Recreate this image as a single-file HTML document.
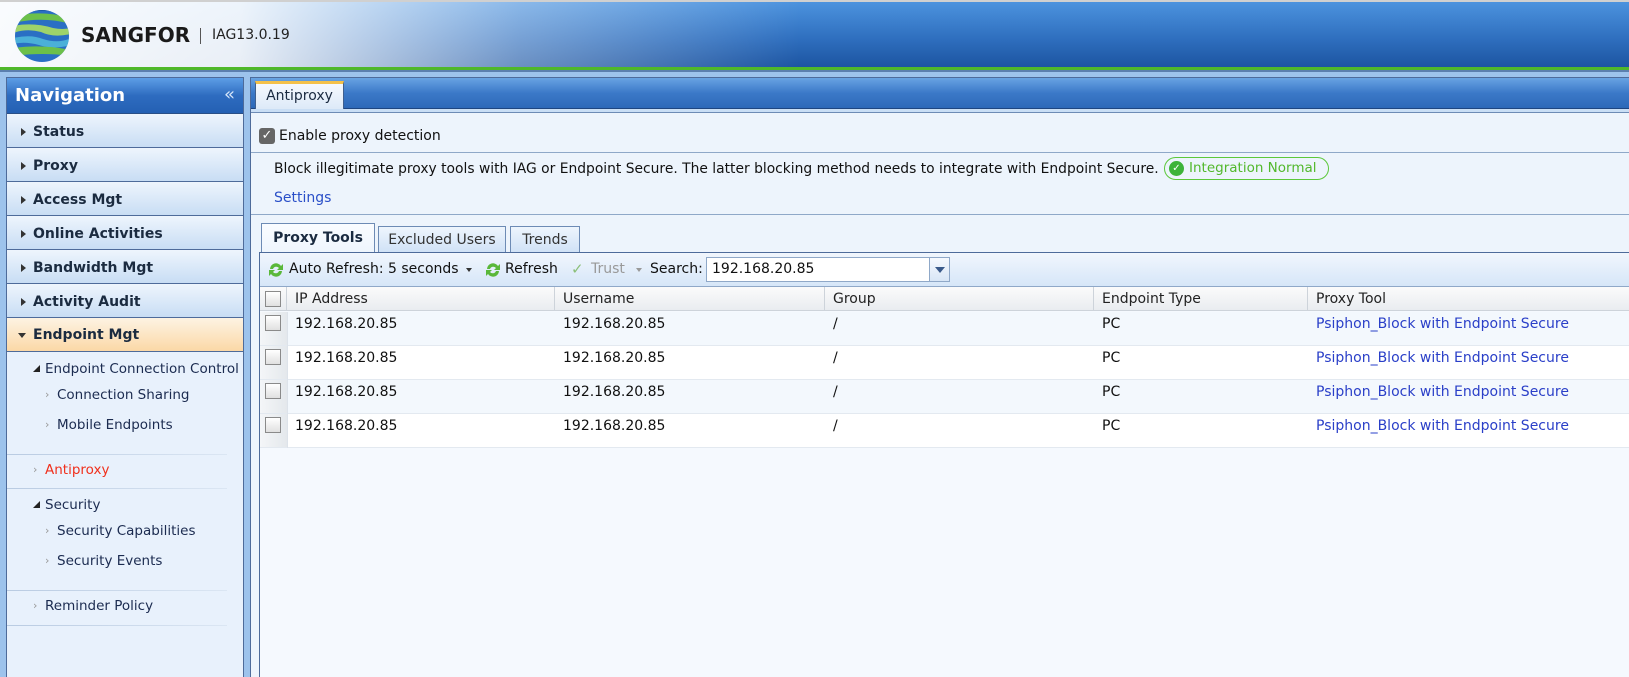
<!DOCTYPE html>
<html style="overflow:hidden;height:677px"><head><meta charset="utf-8"><style>
*{box-sizing:border-box;margin:0;padding:0}
body{width:1629px;height:677px;overflow:hidden;background:#9dc3ec;font-family:"DejaVu Sans","Liberation Sans",sans-serif;font-size:13px;color:#111;position:relative}
.abs{position:absolute}
#hdr{left:0;top:0;width:1629px;height:68px;background:linear-gradient(to right,rgba(255,255,255,.97) 0,rgba(255,255,255,.9) 240px,rgba(255,255,255,.35) 520px,rgba(255,255,255,0) 800px),linear-gradient(#4c93de,#2f6fbf 55%,#1c54a0);border-top:2px solid #d0d0d0}
#green{left:0;top:67px;width:1629px;height:3px;background:#4fb82a}
#strip{left:0;top:70px;width:1629px;height:2px;background:#5b7fae}
#nav{left:6px;top:77px;width:238px;height:600px;border:1px solid #4e6b9a;border-bottom:none;background:#e8f1fc}
#navh{left:0;top:0;width:236px;height:36px;background:linear-gradient(#5d9ee6,#2e6cc0 50%,#2460b3);color:#fff;font-weight:bold;font-size:18px;line-height:36px;padding-left:8px;border-bottom:1px solid #2a4f86}
.ni{position:absolute;left:0;width:236px;height:34px;background:linear-gradient(#eef5fd,#c8ddf4);border-bottom:1px solid #4e6b9a;font-weight:bold;font-size:14px;line-height:36px;padding-left:26px;color:#1b2b40}
.ni:before{content:"";position:absolute;left:14px;top:14px;border-left:5px solid #333;border-top:4px solid transparent;border-bottom:4px solid transparent}
.ni.open{background:linear-gradient(#fdf3e3,#fbd8a6);line-height:35px}
.ni.open:before{left:11px;top:15px;border-top:5px solid #333;border-left:4px solid transparent;border-right:4px solid transparent;border-bottom:0}
.si{position:absolute;font-size:13.5px;color:#1b2b50;white-space:nowrap}
.tri{position:absolute;width:0;height:0;border-right:7px solid #222;border-top:7px solid transparent}
.arr{position:absolute;color:#999;font-size:11px}
.sep{position:absolute;left:0;width:220px;height:1px;background:linear-gradient(to right,#b9cbe2,#dbe6f3)}
#main{left:250px;top:77px;width:1379px;height:600px;border-left:1px solid #4e6b9a;border-top:1px solid #4e6b9a;background:#edf4fc;overflow:hidden}
#tabs{left:0;top:0;width:1379px;height:31px;background:linear-gradient(#68a3e3,#3b79c8 50%,#2d68b8);border-bottom:1px solid #1e4580}
#tab1{left:4px;top:3px;width:89px;height:29px;background:linear-gradient(#f6f9fe,#dce9f8);border:1px solid #3e5f8f;border-bottom:none;border-top:3px solid #f4c14a;font-size:14px;line-height:24px;text-align:center;color:#1a2a40}
#tabline{left:0;top:31px;width:1379px;height:4px;background:#c9def5;border-bottom:1px solid #6d8bb5}
.hsep{position:absolute;left:0;width:1379px;height:1px;background:#8fa8c8}
.cb{position:absolute;width:16px;height:16px;border:1px solid #8a8a8a;background:linear-gradient(#fff,#e0e0e0)}
#stabs div{position:absolute;top:0;height:27px;border:1px solid #6d8bb5;border-bottom:none;background:linear-gradient(#eef5fd,#cfe1f6);font-size:14px;line-height:26px;text-align:center;color:#333}
#grid{left:8px;top:174px;width:1371px;height:426px;border-left:1px solid #4e6b9a;border-top:1px solid #4e6b9a;background:#f5f9fe}
#tb{left:0;top:0;width:1371px;height:34px;background:linear-gradient(#f1f6fd,#d6e6f8);border-bottom:1px solid #8fa8c8;font-size:14px}
.t{position:absolute;white-space:nowrap}
.gh{position:absolute;top:34px;height:24px;background:linear-gradient(#fbfbfb,#e9ecf0);border-right:1px solid #cdd3da;border-bottom:1px solid #cdd3da;font-size:14px;line-height:24px;padding-left:8px;color:#222}
.row{position:absolute;left:0;width:1371px;height:34px;border-bottom:1px solid #e3e9f0;font-size:14px}
.row span{position:absolute;top:4px;white-space:nowrap}
.row .cb{top:3px}
.cc{position:absolute;left:0;top:0;width:27px;height:33px;background:linear-gradient(to right,#f4f6f8,#e4e8ec)}
</style></head><body>
<div id="hdr" class="abs">
<svg class="abs" style="left:13px;top:6px" width="58" height="56" viewBox="0 0 58 56">
<defs><clipPath id="c"><ellipse cx="29" cy="28" rx="27" ry="26"/></clipPath></defs>
<g clip-path="url(#c)">
<rect width="58" height="56" fill="#2a6fc4"/>
<path d="M0 8 Q30 2 58 10 L58 16 Q30 8 0 15Z" fill="#6cc04a"/>
<path d="M0 18 Q20 14 40 20 Q50 22 58 20 L58 26 Q40 30 28 24 Q14 20 0 25Z" fill="#9ed36a"/>
<path d="M0 30 Q18 26 30 31 Q46 36 58 30 L58 37 Q40 42 26 37 Q12 33 0 36Z" fill="#4bb0d8"/>
<path d="M0 40 Q28 36 58 42 L58 48 Q30 44 0 48Z" fill="#6cc04a"/>
<path d="M0 0 L58 0 L58 6 Q30 0 0 6Z" fill="#1b5aa8"/>
</g></svg>
<div class="abs" style="left:81px;top:21px;font-family:'DejaVu Sans',sans-serif;font-weight:bold;font-size:20px;color:#1a1a1a">SANGFOR</div>
<div class="abs" style="left:200px;top:26px;width:1px;height:16px;background:#555"></div>
<div class="abs" style="left:212px;top:25px;font-size:14px;color:#222">IAG13.0.19</div>
</div>
<div id="green" class="abs"></div><div id="strip" class="abs"></div>

<div id="nav" class="abs">
<div id="navh" class="abs">Navigation<span style="position:absolute;right:8px;top:-1px;font-weight:normal;font-size:18px;color:#d6e6fa">«</span></div>
<div class="ni" style="top:36px">Status</div>
<div class="ni" style="top:70px">Proxy</div>
<div class="ni" style="top:104px">Access Mgt</div>
<div class="ni" style="top:138px">Online Activities</div>
<div class="ni" style="top:172px">Bandwidth Mgt</div>
<div class="ni" style="top:206px">Activity Audit</div>
<div class="ni open" style="top:240px">Endpoint Mgt</div>
<div class="tri" style="left:26px;top:287px"></div><div class="si" style="left:38px;top:283px">Endpoint Connection Control</div>
<div class="arr" style="left:38px;top:310px">›</div><div class="si" style="left:50px;top:309px">Connection Sharing</div>
<div class="arr" style="left:38px;top:340px">›</div><div class="si" style="left:50px;top:339px">Mobile Endpoints</div>
<div class="sep" style="top:376px"></div>
<div class="arr" style="left:26px;top:385px">›</div><div class="si" style="left:38px;top:384px;color:#f0301c">Antiproxy</div>
<div class="sep" style="top:410px"></div>
<div class="tri" style="left:26px;top:423px"></div><div class="si" style="left:38px;top:419px">Security</div>
<div class="arr" style="left:38px;top:446px">›</div><div class="si" style="left:50px;top:445px">Security Capabilities</div>
<div class="arr" style="left:38px;top:476px">›</div><div class="si" style="left:50px;top:475px">Security Events</div>
<div class="sep" style="top:512px"></div>
<div class="arr" style="left:26px;top:521px">›</div><div class="si" style="left:38px;top:520px">Reminder Policy</div>
<div class="sep" style="top:547px"></div>
</div>

<div id="main" class="abs">
<div id="tabs" class="abs"><div id="tab1" class="abs">Antiproxy</div></div>
<div id="tabline" class="abs"></div>
<div class="abs" style="left:8px;top:50px;width:16px;height:16px;border-radius:3px;background:#666;color:#fff;font-size:13px;line-height:16px;text-align:center;font-weight:bold">✓</div>
<div class="t" style="left:28px;top:50px;font-size:14px">Enable proxy detection</div>
<div class="hsep" style="top:74px"></div>
<div class="t" style="left:23px;top:83px;font-size:13.85px">Block illegitimate proxy tools with IAG or Endpoint Secure. The latter blocking method needs to integrate with Endpoint Secure.</div>
<div class="abs" style="left:913px;top:79px;width:165px;height:23px;border:1px solid #5cc83a;border-radius:12px;color:#52b82c;font-size:13.5px;line-height:21px;padding-left:24px;white-space:nowrap">Integration Normal
<div class="abs" style="left:4px;top:3px;width:15px;height:15px;border-radius:50%;background:#3db33a;color:#fff;font-size:10px;line-height:15px;text-align:center;font-weight:bold">✓</div></div>
<div class="t" style="left:23px;top:112px;font-size:14px;color:#2a4fc8">Settings</div>
<div class="hsep" style="top:136px"></div>
<div id="stabs">
<div style="left:10px;top:145px;width:114px;height:30px;background:linear-gradient(#fafcff,#eef5fd);font-weight:bold;color:#1b2b40;line-height:28px">Proxy Tools</div>
<div style="left:127px;top:148px;width:128px">Excluded Users</div>
<div style="left:259px;top:148px;width:70px">Trends</div>
</div>
<div id="grid" class="abs">
<div id="tb" class="abs">
<svg class="abs" style="left:8px;top:9px" width="16" height="16" viewBox="0 0 16 16"><path d="M2 7 A6 6 0 0 1 13 4 L15 2 L15 8 L9 8 L11 6 A3.5 3.5 0 0 0 5 7Z M14 9 A6 6 0 0 1 3 12 L1 14 L1 8 L7 8 L5 10 A3.5 3.5 0 0 0 11 9Z" fill="#5ab83a"/></svg>
<div class="t" style="left:29px;top:8px">Auto Refresh: 5 seconds</div>
<div class="abs" style="left:206px;top:15px;border-top:4px solid #333;border-left:3px solid transparent;border-right:3px solid transparent"></div>
<svg class="abs" style="left:225px;top:9px" width="16" height="16" viewBox="0 0 16 16"><path d="M2 7 A6 6 0 0 1 13 4 L15 2 L15 8 L9 8 L11 6 A3.5 3.5 0 0 0 5 7Z M14 9 A6 6 0 0 1 3 12 L1 14 L1 8 L7 8 L5 10 A3.5 3.5 0 0 0 11 9Z" fill="#5ab83a"/></svg>
<div class="t" style="left:245px;top:8px">Refresh</div>
<div class="t" style="left:311px;top:7px;color:#8cc07a;font-size:15px">✓</div>
<div class="t" style="left:331px;top:8px;color:#999">Trust</div>
<div class="abs" style="left:376px;top:15px;border-top:4px solid #999;border-left:3px solid transparent;border-right:3px solid transparent"></div>
<div class="t" style="left:390px;top:8px">Search:</div>
<div class="abs" style="left:446px;top:4px;width:244px;height:25px;border:1px solid #8fa8c8;background:#fff;padding-left:5px;line-height:23px">192.168.20.85
<div class="abs" style="right:-1px;top:-1px;width:21px;height:25px;border:1px solid #8fa8c8;background:linear-gradient(#f6f9fe,#d8e6f6)"><div class="abs" style="left:5px;top:9px;border-top:6px solid #3a5a8a;border-left:5px solid transparent;border-right:5px solid transparent"></div></div></div>
</div>
<div class="gh" style="left:0;width:27px"></div><div class="cb" style="left:5px;top:38px"></div>
<div class="gh" style="left:27px;width:268px">IP Address</div>
<div class="gh" style="left:295px;width:270px">Username</div>
<div class="gh" style="left:565px;width:269px">Group</div>
<div class="gh" style="left:834px;width:214px">Endpoint Type</div>
<div class="gh" style="left:1048px;width:323px;border-right:none">Proxy Tool</div>
<div class="row" style="top:59px;background:#f3f8fd"><div class="cc"></div><div class="cb" style="left:5px"></div><span style="left:35px">192.168.20.85</span><span style="left:303px">192.168.20.85</span><span style="left:573px">/</span><span style="left:842px">PC</span><span style="left:1056px;color:#2a3fc8">Psiphon_Block with Endpoint Secure</span></div>
<div class="row" style="top:93px;background:#fff"><div class="cc"></div><div class="cb" style="left:5px"></div><span style="left:35px">192.168.20.85</span><span style="left:303px">192.168.20.85</span><span style="left:573px">/</span><span style="left:842px">PC</span><span style="left:1056px;color:#2a3fc8">Psiphon_Block with Endpoint Secure</span></div>
<div class="row" style="top:127px;background:#f3f8fd"><div class="cc"></div><div class="cb" style="left:5px"></div><span style="left:35px">192.168.20.85</span><span style="left:303px">192.168.20.85</span><span style="left:573px">/</span><span style="left:842px">PC</span><span style="left:1056px;color:#2a3fc8">Psiphon_Block with Endpoint Secure</span></div>
<div class="row" style="top:161px;background:#fff"><div class="cc"></div><div class="cb" style="left:5px"></div><span style="left:35px">192.168.20.85</span><span style="left:303px">192.168.20.85</span><span style="left:573px">/</span><span style="left:842px">PC</span><span style="left:1056px;color:#2a3fc8">Psiphon_Block with Endpoint Secure</span></div>
<div class="abs" style="left:27px;top:59px;width:1px;height:136px;background:#dde3ea"></div>
</div>
</div>
</body></html>
